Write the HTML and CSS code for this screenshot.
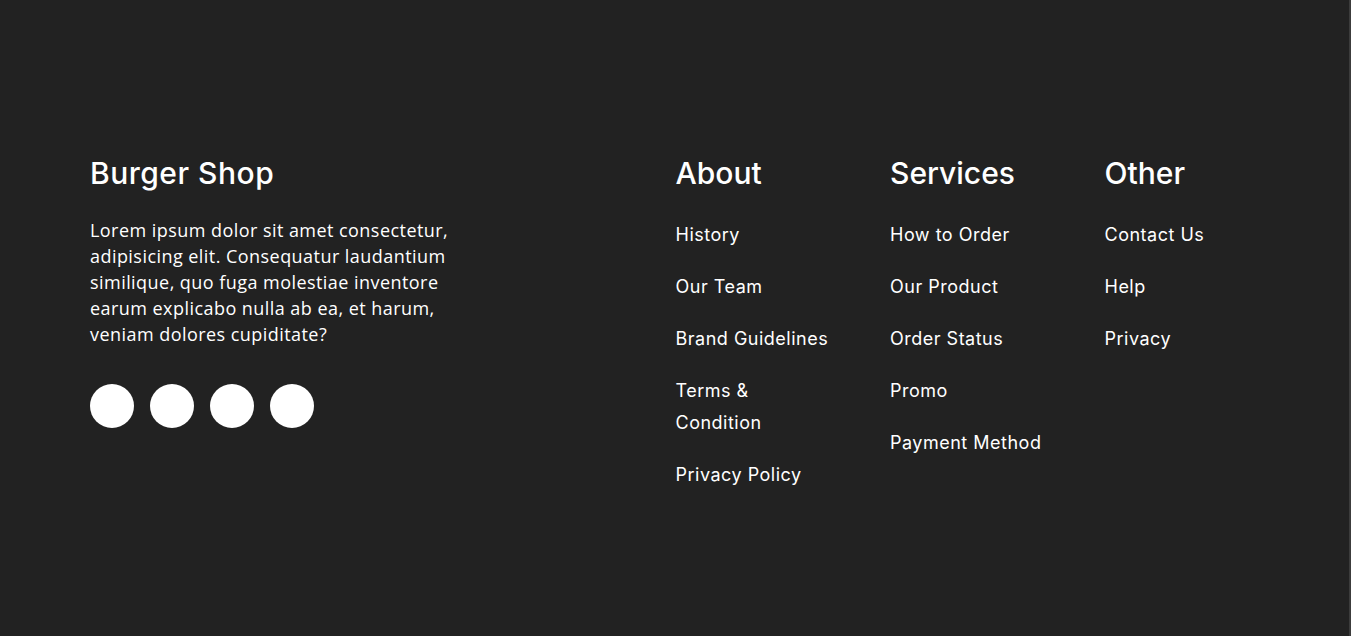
FILE: index.html
```html
<!DOCTYPE html>
<html lang="en">
<head>
<meta charset="utf-8">
<title>Burger Shop Footer</title>
<link rel="stylesheet" href="styles.css">
</head>
<body>
<footer class="footer">
  <div class="brand">
    <h3 class="title">Burger Shop</h3>
    <p class="desc">Lorem ipsum dolor sit amet consectetur, adipisicing elit. Consequatur laudantium similique, quo fuga molestiae inventore earum explicabo nulla ab ea, et harum, veniam dolores cupiditate?</p>
    <div class="socials">
      <a class="social" href="#"></a>
      <a class="social" href="#"></a>
      <a class="social" href="#"></a>
      <a class="social" href="#"></a>
    </div>
  </div>
  <div class="col">
    <h3 class="title">About</h3>
    <ul class="links">
      <li><a href="#">History</a></li>
      <li><a href="#">Our Team</a></li>
      <li><a href="#">Brand Guidelines</a></li>
      <li><a href="#">Terms &amp; Condition</a></li>
      <li><a href="#">Privacy Policy</a></li>
    </ul>
  </div>
  <div class="col">
    <h3 class="title">Services</h3>
    <ul class="links">
      <li><a href="#">How to Order</a></li>
      <li><a href="#">Our Product</a></li>
      <li><a href="#">Order Status</a></li>
      <li><a href="#">Promo</a></li>
      <li><a href="#">Payment Method</a></li>
    </ul>
  </div>
  <div class="col">
    <h3 class="title">Other</h3>
    <ul class="links">
      <li><a href="#">Contact Us</a></li>
      <li><a href="#">Help</a></li>
      <li><a href="#">Privacy</a></li>
    </ul>
  </div>
</footer>
</body>
</html>
```

FILE: styles.css
```css
* { box-sizing: border-box; }
html, body {
  margin: 0;
  height: 100%;
}
body {
  background: #222222;
  color: #ffffff;
  border-right: 2px solid #3c3c3c;
  font-family: "Inter", "Noto Sans", sans-serif;
}
.footer {
  display: grid;
  grid-template-columns: 1fr 214.5px 214.5px 214.5px;
  padding: 151px 30px 0 90px;
}
.title {
  margin: 0;
  font-size: 30px;
  line-height: 45px;
  font-weight: 500;
  letter-spacing: 0.5px;
}
.col .title {
  letter-spacing: 0;
}
.desc {
  margin: 21px 0 0;
  width: 385px;
  font-family: "Open Sans", "Lato", sans-serif;
  font-size: 18px;
  line-height: 26px;
  letter-spacing: 0.45px;
}
.socials {
  display: flex;
  gap: 16px;
  margin-top: 37px;
}
.social {
  width: 44px;
  height: 44px;
  border-radius: 50%;
  background: #ffffff;
}
.links {
  list-style: none;
  margin: 23px 0 0;
  padding: 0;
  display: flex;
  flex-direction: column;
  gap: 20px;
  max-width: 158px;
}
.links a {
  color: #ffffff;
  text-decoration: none;
  font-size: 18px;
  line-height: 32px;
  letter-spacing: 0.5px;
}
```
